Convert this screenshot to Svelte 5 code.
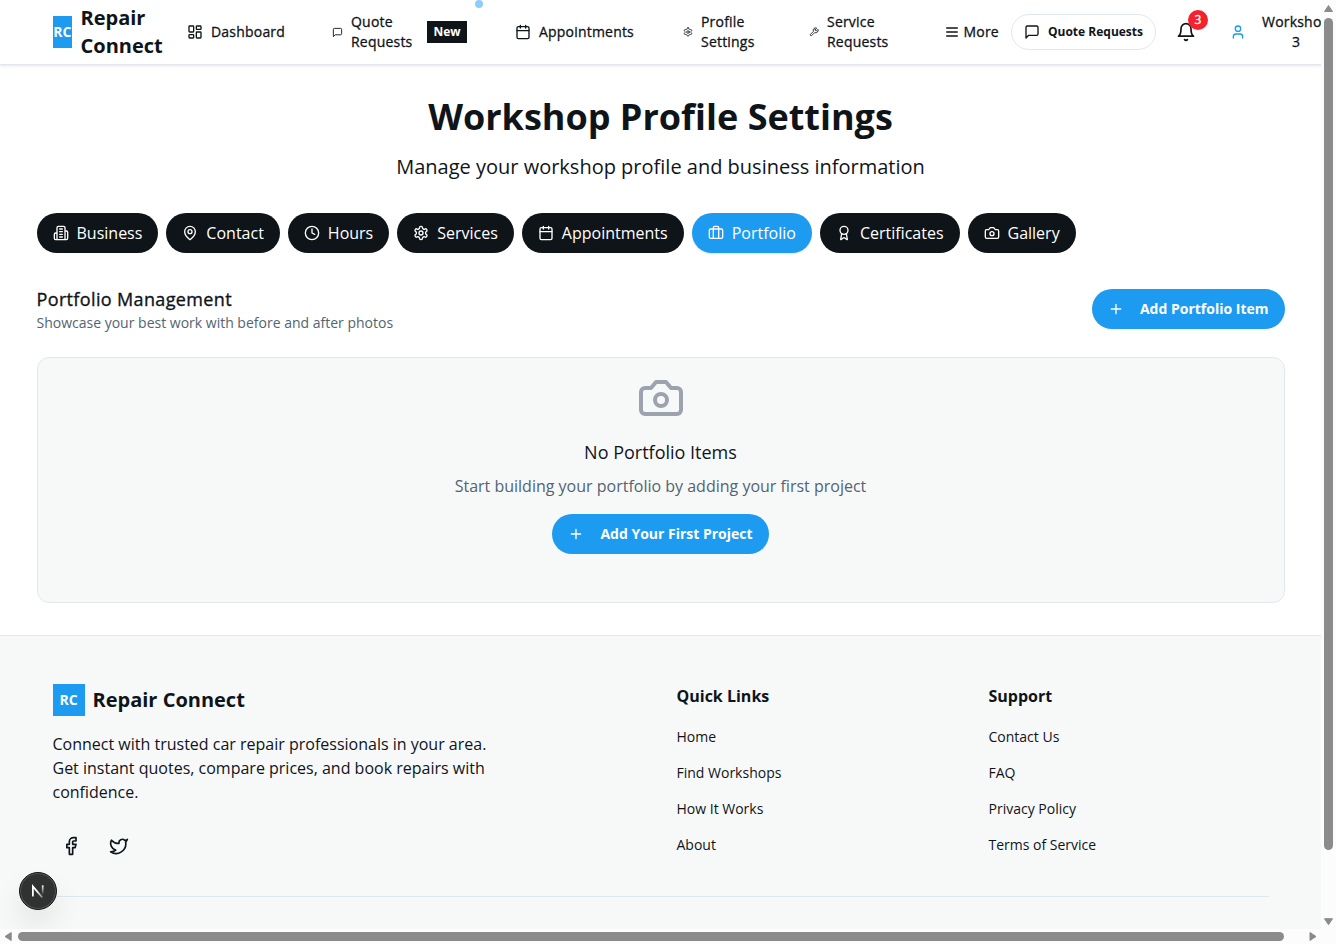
<script>
  const icons = {
    dashboard: '<rect x="3" y="3" width="7" height="9" rx="1"/><rect x="14" y="3" width="7" height="5" rx="1"/><rect x="14" y="12" width="7" height="9" rx="1"/><rect x="3" y="16" width="7" height="5" rx="1"/>',
    message: '<path d="M21 15a2 2 0 0 1-2 2H7l-4 4V5a2 2 0 0 1 2-2h14a2 2 0 0 1 2 2z"/>',
    calendar: '<path d="M8 2v4M16 2v4M3 10h18"/><rect x="3" y="4" width="18" height="18" rx="2"/>',
    settings: '<path d="M12.22 2h-.44a2 2 0 0 0-2 2v.18a2 2 0 0 1-1 1.73l-.43.25a2 2 0 0 1-2 0l-.15-.08a2 2 0 0 0-2.73.73l-.22.38a2 2 0 0 0 .73 2.73l.15.1a2 2 0 0 1 1 1.72v.51a2 2 0 0 1-1 1.74l-.15.09a2 2 0 0 0-.73 2.73l.22.38a2 2 0 0 0 2.73.73l.15-.08a2 2 0 0 1 2 0l.43.25a2 2 0 0 1 1 1.73V20a2 2 0 0 0 2 2h.44a2 2 0 0 0 2-2v-.18a2 2 0 0 1 1-1.73l.43-.25a2 2 0 0 1 2 0l.15.08a2 2 0 0 0 2.73-.73l.22-.39a2 2 0 0 0-.73-2.73l-.15-.08a2 2 0 0 1-1-1.74v-.5a2 2 0 0 1 1-1.74l.15-.09a2 2 0 0 0 .73-2.73l-.22-.38a2 2 0 0 0-2.73-.73l-.15.08a2 2 0 0 1-2 0l-.43-.25a2 2 0 0 1-1-1.73V4a2 2 0 0 0-2-2z"/><circle cx="12" cy="12" r="3"/>',
    wrench: '<path d="M14.7 6.3a1 1 0 0 0 0 1.4l1.6 1.6a1 1 0 0 0 1.4 0l3.77-3.77a6 6 0 0 1-7.94 7.94l-6.91 6.91a2.12 2.12 0 0 1-3-3l6.91-6.91a6 6 0 0 1 7.94-7.94l-3.76 3.76z"/>',
    menu: '<path d="M4 6h16M4 12h16M4 18h16"/>',
    bell: '<path d="M6 8a6 6 0 0 1 12 0c0 7 3 9 3 9H3s3-2 3-9M10.3 21a1.94 1.94 0 0 0 3.4 0"/>',
    user: '<path d="M19 21v-2a4 4 0 0 0-4-4H9a4 4 0 0 0-4 4v2"/><circle cx="12" cy="7" r="4"/>',
    building: '<path d="M6 22V4a2 2 0 0 1 2-2h8a2 2 0 0 1 2 2v18ZM6 12H4a2 2 0 0 0-2 2v6a2 2 0 0 0 2 2h2M18 9h2a2 2 0 0 1 2 2v9a2 2 0 0 1-2 2h-2M10 6h4M10 10h4M10 14h4M10 18h4"/>',
    pin: '<path d="M20 10c0 6-8 12-8 12s-8-6-8-12a8 8 0 0 1 16 0Z"/><circle cx="12" cy="10" r="3"/>',
    clock: '<circle cx="12" cy="12" r="10"/><path d="M12 6v6l4 2"/>',
    briefcase: '<path d="M16 20V4a2 2 0 0 0-2-2h-4a2 2 0 0 0-2 2v16"/><rect x="2" y="6" width="20" height="14" rx="2"/>',
    award: '<circle cx="12" cy="8" r="6"/><path d="m15.477 12.89 1.515 8.526a.5.5 0 0 1-.81.47l-3.58-2.687a1 1 0 0 0-1.197 0l-3.586 2.686a.5.5 0 0 1-.81-.469l1.514-8.526"/>',
    camera: '<path d="M14.5 4h-5L7 7H4a2 2 0 0 0-2 2v9a2 2 0 0 0 2 2h16a2 2 0 0 0 2-2V9a2 2 0 0 0-2-2h-3l-2.5-3z"/><circle cx="12" cy="13" r="3"/>',
    plus: '<path d="M5 12h14M12 5v14"/>',
    facebook: '<path d="M18 2h-3a5 5 0 0 0-5 5v3H7v4h3v8h4v-8h3l1-4h-4V7a1 1 0 0 1 1-1h3z"/>',
    twitter: '<path d="M22 4s-.7 2.1-2 3.4c1.6 10-9.4 17.3-18 11.6 2.2.1 4.4-.6 6-2C3 15.5.5 9.6 3 5c2.2 2.6 5.6 4.1 9 4-.9-4.2 4-6.6 7-3.8 1.1 0 3-1.2 3-1.2z"/>'
  };

  const tabs = [
    ['Business', 'building'],
    ['Contact', 'pin'],
    ['Hours', 'clock'],
    ['Services', 'settings'],
    ['Appointments', 'calendar'],
    ['Portfolio', 'briefcase'],
    ['Certificates', 'award'],
    ['Gallery', 'camera']
  ];

  const columns = [
    ['Quick Links', ['Home', 'Find Workshops', 'How It Works', 'About']],
    ['Support', ['Contact Us', 'FAQ', 'Privacy Policy', 'Terms of Service']]
  ];
</script>

{#snippet icon(name, size)}
  <svg class="icon" width={size} height={size} viewBox="0 0 24 24">{@html icons[name]}</svg>
{/snippet}

<div class="window">
  <div class="page">
    <header>
      <div class="bar">
        <a class="brand">
          <span class="mark">RC</span>
          <span class="name">Repair Connect</span>
        </a>
        <nav>
          <a class="item dashboard">{@render icon('dashboard', 16)}<span>Dashboard</span></a>
          <a class="item quote">{@render icon('message', 11)}<span>Quote Requests</span><b class="new">New</b><i class="dot"></i></a>
          <a class="item appointments">{@render icon('calendar', 16)}<span>Appointments</span></a>
          <a class="item profile">{@render icon('settings', 10)}<span>Profile Settings</span></a>
          <a class="item service">{@render icon('wrench', 10)}<span>Service Requests</span></a>
        </nav>
        <a class="more">{@render icon('menu', 16)}<span>More</span></a>
        <button class="quotes">{@render icon('message', 16)}<span>Quote Requests</span></button>
        <a class="bell">{@render icon('bell', 20)}<b>3</b></a>
        <a class="account">{@render icon('user', 16)}<span>Workshop 3</span></a>
      </div>
    </header>

    <main>
      <h1>Workshop Profile Settings</h1>
      <p class="lead">Manage your workshop profile and business information</p>
      <div class="tabs">
        {#each tabs as [label, glyph]}
          <button class="tab" class:active={label === 'Portfolio'}>
            {@render icon(glyph, 16)}<span>{label}</span>
          </button>
        {/each}
      </div>
      <div class="section">
        <div>
          <h2>Portfolio Management</h2>
          <p>Showcase your best work with before and after photos</p>
        </div>
        <button class="primary">{@render icon('plus', 16)}<span>Add Portfolio Item</span></button>
      </div>
      <div class="empty">
        {@render icon('camera', 48)}
        <h3>No Portfolio Items</h3>
        <p>Start building your portfolio by adding your first project</p>
        <button class="primary first">{@render icon('plus', 16)}<span>Add Your First Project</span></button>
      </div>
    </main>

    <footer>
      <div class="foot">
        <div class="about">
          <div class="fbrand"><span class="mark">RC</span><span>Repair Connect</span></div>
          <p>Connect with trusted car repair professionals in your area. Get instant quotes, compare prices, and book repairs with confidence.</p>
          <div class="social">{@render icon('facebook', 20)}{@render icon('twitter', 20)}</div>
        </div>
        {#each columns as [title, links]}
          <div class="links">
            <h4>{title}</h4>
            {#each links as link}<a>{link}</a>{/each}
          </div>
        {/each}
      </div>
    </footer>
    <div class="dev">
      <svg width="36" height="36" viewBox="0 0 36 36">
        <defs>
          <linearGradient id="fadeSlash" x1="18" y1="18" x2="23" y2="25" gradientUnits="userSpaceOnUse"><stop stop-color="#fff"/><stop offset="1" stop-color="#fff" stop-opacity=".3"/></linearGradient>
          <linearGradient id="fadeBar" x1="22" y1="12" x2="22" y2="22" gradientUnits="userSpaceOnUse"><stop stop-color="#fff"/><stop offset="1" stop-color="#fff" stop-opacity="0"/></linearGradient>
        </defs>
        <path d="M12.9 23.6V13.5l9.4 11" fill="none" stroke="url(#fadeSlash)" stroke-width="1.8"/>
        <path d="M22.7 12.3v9.5" fill="none" stroke="url(#fadeBar)" stroke-width="1.7"/>
      </svg>
    </div>
  </div>
  <div class="vscroll">
    <svg width="15" height="17"><path d="M7.5 5.5 11.5 11.5h-8z" fill="#8b8b8b" stroke="#8b8b8b" stroke-linejoin="round"/></svg>
    <div class="thumb"></div>
    <svg width="15" height="17"><path d="M3.5 6.7h8L7.5 12.7z" fill="#8b8b8b" stroke="#8b8b8b" stroke-linejoin="round"/></svg>
  </div>
  <div class="hscroll">
    <svg width="18" height="15"><path d="M5 7.5 11.2 3.5v8z" fill="#8b8b8b" stroke="#8b8b8b" stroke-linejoin="round"/></svg>
    <div class="thumb"></div>
    <svg width="18" height="15"><path d="M17 7.5 11 3.5v8z" fill="#8b8b8b" stroke="#8b8b8b" stroke-linejoin="round"/></svg>
  </div>
</div>

<style>
  :global(body) { margin: 0; overflow: hidden; }
  .window, .window :global(*) { box-sizing: border-box; }
  .window {
    width: 1336px; height: 944px; overflow: hidden;
    display: grid; grid-template: 929px 15px / 1321px 15px;
    font-family: "Open Sans", sans-serif; font-size: 16px; line-height: 24px;
    color: #0f1419; background: #fcfcfc;
  }
  .page { position: relative; overflow: hidden; background: #fff; display: flex; flex-direction: column; }
  .icon { flex: none; display: block; fill: none; stroke: currentColor; stroke-width: 2; stroke-linecap: round; stroke-linejoin: round; }
  h1, h2, h3, h4, p { margin: 0; }
  button { font: inherit; border: 0; padding: 0; }

  header { height: 65px; flex: none; border-bottom: 1px solid #e1e8ed; box-shadow: 0 1px 3px #0000001a; }
  .bar { height: 64px; width: 1330px; padding-left: 52.5px; display: flex; align-items: center; font-size: 14px; line-height: 20px; font-weight: 500; }
  .bar > *, .item { flex: none; }
  /* Medium weight, between the regular and bold faces */
  .item > span, .more > span, .account > span { letter-spacing: .2px; -webkit-text-stroke: .3px currentColor; }
  .brand { display: flex; align-items: center; gap: 8.5px; width: 134.5px; }
  .mark { display: flex; align-items: center; justify-content: center; height: 32px; background: #1d9bf0; color: #fff; font-size: 14px; font-weight: 700; line-height: 20px; }
  .brand .mark { width: 19.5px; flex: none; }
  .name { width: 90px; font-size: 20px; line-height: 28px; font-weight: 700; }
  nav { display: flex; align-items: center; gap: 48px; width: 756.5px; }
  .item { display: flex; align-items: center; gap: 8px; position: relative; }
  .dashboard { width: 97px; }
  .quote { width: 135px; }
  .quote span { width: 68px; }
  .new { width: 40px; height: 22px; background: #0f1419; color: #fff; font-size: 12px; line-height: 22px; text-align: center; }
  .dot { position: absolute; right: -16px; top: -12px; width: 8px; height: 8px; border-radius: 50%; background: #8ecdf8; }
  .quote .dot { top: -12px; }
  .appointments { width: 120px; }
  .profile { width: 78px; }
  .service { width: 87px; }
  .more { display: flex; align-items: center; gap: 4px; width: 68.5px; }
  .more .icon { stroke-width: 1.9; }
  .quotes { display: flex; align-items: center; width: 145px; height: 36px; gap: 8px; padding-left: 12px; margin-left: -1px; border: 1px solid #e1e8ed; border-radius: 18px; background: #fff; color: #0f1419; font-size: 12px; font-weight: 700; line-height: 16px; }
  .bell { position: relative; margin-left: 20px; }
  .bell b { position: absolute; left: 12px; top: -12px; width: 20px; height: 20px; border-radius: 50%; background: #f4212e; color: #fff; font-size: 12px; font-weight: 500; text-align: center; -webkit-text-stroke: .3px currentColor; }
  .account { display: flex; align-items: center; gap: 16px; margin-left: 34px; text-align: center; }
  .account .icon { color: #1d9bf0; }
  .account span { width: 68px; }

  main { width: 1280px; height: 570px; flex: none; margin: 0 auto; padding: 32px 16px 0; }
  h1 { font-size: 36px; line-height: 40px; font-weight: 700; text-align: center; }
  .lead { font-size: 20px; line-height: 28px; margin-top: 16px; text-align: center; }
  .tabs { display: flex; gap: 8px; margin-top: 32px; }
  .tab { display: flex; align-items: center; height: 40px; flex: none; padding: 0 16px; gap: 8px; border-radius: 20px; background: #0f1419; color: #fff; }
  .tab.active { background: #1d9bf0; box-shadow: 0 1px 2px #0000001a; }
  .section { display: flex; justify-content: space-between; margin-top: 36px; height: 40px; }
  .section > div { margin-top: -4px; }
  h2 { font-size: 18px; line-height: 28px; font-weight: 500; letter-spacing: .36px; -webkit-text-stroke: .35px currentColor; }
  .section p { font-size: 14px; line-height: 20px; color: #536471; }
  .primary { display: flex; align-items: center; gap: 16px; height: 40px; padding: 0 16px; border-radius: 20px; background: #1d9bf0; color: #fff; font-size: 14px; font-weight: 700; line-height: 20px; }
  .first { margin-top: 16px; }
  .empty { height: 246px; margin-top: 28px; padding-top: 16px; display: flex; flex-direction: column; align-items: center; border: 1px solid #e1e8ed; border-radius: 12px; background: #f7f9f9; }
  .empty > .icon { color: #9ca3af; }
  h3 { font-size: 18px; line-height: 28px; font-weight: 400; margin-top: 16px; }
  .empty p { color: #536471; margin-top: 8px; }

  footer { flex: 1; background: #f7f9f9; border-top: 1px solid #e1e8ed; }
  .foot { width: 1216px; height: 261px; margin: 0 auto; padding-top: 48px; border-bottom: 1px solid #dce7ef; display: grid; grid-template-columns: 592px 280px 280px; column-gap: 32px; }
  .fbrand { display: flex; align-items: center; gap: 8px; font-size: 20px; font-weight: 700; line-height: 28px; }
  .fbrand .mark { width: 32px; }
  .about p { width: 448px; margin-top: 16px; }
  .social { display: flex; gap: 28px; margin: 32px 0 0 8px; }
  .links { display: flex; flex-direction: column; font-size: 14px; line-height: 20px; }
  h4 { font-size: 16px; line-height: 24px; font-weight: 700; margin-bottom: 3px; }
  .links a { margin-top: 16px; }

  .dev { position: absolute; left: 19px; top: 872px; width: 38px; height: 38px; border-radius: 50%; background: #303231; border: 1px solid #161616; box-shadow: inset 0 0 0 1px #555, 0 16px 32px -8px #0000003d; }
  .dev svg { display: block; }
  .vscroll { display: flex; flex-direction: column; }
  .vscroll .thumb { width: 9px; height: 832px; margin: 1px 0 62px 3px; border-radius: 5px; background: #8b8b8b; }
  .hscroll { display: flex; }
  .hscroll .thumb { width: 1266px; height: 9px; margin: 3px 15px 0 0; border-radius: 5px; background: #8b8b8b; }
</style>
